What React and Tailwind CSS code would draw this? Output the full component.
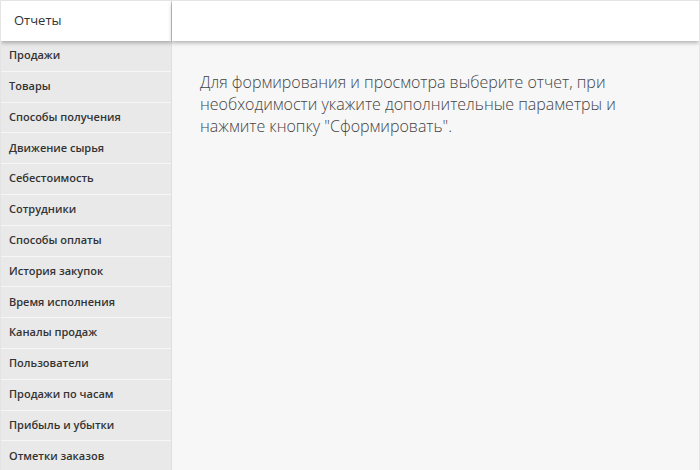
import React from "react";

const reports = [
  "Продажи",
  "Товары",
  "Способы получения",
  "Движение сырья",
  "Себестоимость",
  "Сотрудники",
  "Способы оплаты",
  "История закупок",
  "Время исполнения",
  "Каналы продаж",
  "Пользователи",
  "Продажи по часам",
  "Прибыль и убытки",
  "Отметки заказов",
];

export default function App() {
  return (
    <div
      className="w-[700px] h-[470px] overflow-hidden flex border-t border-l border-r border-[#e4e4e4] bg-[#f7f7f7] text-[#333]"
      style={{ fontFamily: '"Open Sans", "Noto Sans", sans-serif' }}
    >
      <aside className="w-[171px] shrink-0 flex flex-col bg-[#e9e9e9] border-r border-[#dedede]">
        <div className="h-[40px] shrink-0 bg-white flex items-center px-[13px] text-[13px] relative z-10 shadow-[0_2px_4px_rgba(0,0,0,0.28)]">
          Отчеты
        </div>
        <nav className="flex flex-col">
          {reports.map((r) => (
            <div
              key={r}
              className="h-[30.8px] shrink-0 flex items-center px-[8px] pb-[1px] text-[11px] font-semibold text-[#333] border-b border-[#f6f6f6]"
            >
              {r}
            </div>
          ))}
        </nav>
      </aside>
      <main className="flex-1 flex flex-col">
        <div className="h-[40px] shrink-0 bg-white relative z-10 shadow-[0_2px_4px_rgba(0,0,0,0.28)]" />
        <div className="pl-[28px] pt-[30px] text-[16px] font-light leading-[22px] text-[#444]">
          Для формирования и просмотра выберите отчет, при
          <br />
          необходимости укажите дополнительные параметры и
          <br />
          нажмите кнопку "Сформировать".
        </div>
      </main>
    </div>
  );
}
